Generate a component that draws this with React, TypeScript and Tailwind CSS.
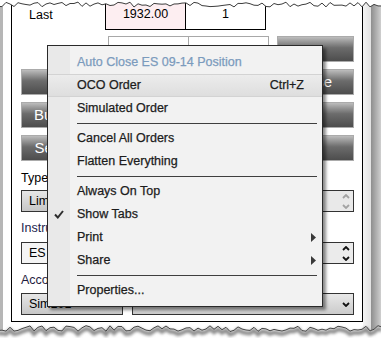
import React from 'react';

type Item =
  | { sep: true }
  | { sep?: false; label: string; disabled?: boolean; hover?: boolean; shortcut?: string; check?: boolean; sub?: boolean };

const menu: Item[] = [
  { label: 'Auto Close ES 09-14 Position', disabled: true },
  { label: 'OCO Order', shortcut: 'Ctrl+Z', hover: true },
  { label: 'Simulated Order' },
  { sep: true },
  { label: 'Cancel All Orders' },
  { label: 'Flatten Everything' },
  { sep: true },
  { label: 'Always On Top' },
  { label: 'Show Tabs', check: true },
  { label: 'Print', sub: true },
  { label: 'Share', sub: true },
  { sep: true },
  { label: 'Properties...' },
];

function jag(y0: number, amp: number, seed: number) {
  let s = seed;
  const pts: string[] = [];
  for (let x = -2; x <= 384; x += 4) {
    s = (s * 9301 + 49297) % 233280;
    const r = s / 233280;
    pts.push(`${x},${(y0 + (r - 0.5) * amp).toFixed(1)}`);
  }
  return pts;
}

function Caret({ down, color }: { down?: boolean; color: string }) {
  return (
    <svg width="8" height="5" viewBox="0 0 8 5">
      <path d={down ? 'M1,1 L4,4 L7,1' : 'M1,4 L4,1 L7,4'} fill="none" stroke={color} strokeWidth="1.8" />
    </svg>
  );
}

function Btn({ label, className = '' }: { label?: string; className?: string }) {
  return (
    <div className={`h-[26px] flex items-center justify-center border border-[#ababab] bg-gradient-to-b from-[#bdbdbd] via-[#6c6c6c] via-45% to-[#4d4d4d] text-white text-[15px] whitespace-nowrap overflow-hidden ${className}`}>
      {label}
    </div>
  );
}

export default function App() {
  const top = jag(4.5, 5, 17);
  const bot = jag(328.5, 6, 91);

  return (
    <div className="relative w-[381px] h-[340px] bg-white overflow-hidden font-['Liberation_Sans',Arial,sans-serif] text-black">
      <div className="flex h-[330px]">
        <div className="w-[3px] bg-[#b6b6b6]" />
        <div className="w-[8px]" />
        <div className="w-[352px] flex flex-col">
          {/* window body */}
          <div className="h-[322px] border-x border-b border-black pl-[9px] pr-[8px] flex flex-col">
            {/* Last row */}
            <div className="flex h-[30px] text-[12.5px]">
              <div className="w-[84px] pl-[8px] flex items-center">Last</div>
              <div className="w-[81px] bg-[#fdeef1] border-x border-b border-black flex items-center justify-center">1932.00</div>
              <div className="w-[80px] border-r border-b border-black flex items-center justify-center">1</div>
            </div>

            <div className="flex mt-[6px] gap-[8px]">
              <div className="w-[84px]" />
              <div className="flex">
                <div className="w-[81px] h-[26px] border border-[#a8a8a8]" />
                <div className="w-[80px] h-[26px] border border-l-0 border-[#a8a8a8]" />
              </div>
              <Btn className="w-[82px] ml-auto" />
            </div>

            <div className="flex flex-col gap-[7px] mt-[7px]">
              <div className="flex gap-[9px]">
                <Btn className="w-[102px]" />
                <Btn className="flex-1" />
                <Btn className="w-[82px]" label="Close" />
              </div>
              <div className="flex gap-[9px]">
                <Btn className="w-[102px]" label="Buy Market" />
                <Btn className="flex-1" />
                <Btn className="w-[82px]" />
              </div>
              <div className="flex gap-[9px]">
                <Btn className="w-[102px]" label="Sell Market" />
                <Btn className="flex-1" />
                <Btn className="w-[82px]" />
              </div>
            </div>

            <div className="mt-[9px] h-[16px] text-[12.5px] leading-[16px]">Type</div>
            <div className="flex gap-[9px] mt-[4px] text-[12.5px]">
              <div className="w-[102px] h-[22px] border border-[#333] bg-gradient-to-b from-[#e6e6e6] to-[#c7c7c7] pl-[7px] flex items-center">Limit</div>
              <div className="flex-1 h-[22px] border border-[#333] bg-[#e9e9e9] flex flex-col items-end justify-center gap-[5px] pr-[3px]">
                <Caret color="#a3a3a3" />
                <Caret down color="#a3a3a3" />
              </div>
            </div>

            <div className="mt-[8px] h-[16px] text-[12.5px] leading-[16px] text-[#221d4d]">Instrument</div>
            <div className="flex gap-[9px] mt-[6px] text-[12.5px]">
              <div className="w-[102px] h-[22px] border border-[#333] bg-[#f4f4f4] pl-[7px] flex items-center">ES 09-14</div>
              <div className="flex-1 h-[22px] border border-[#333] bg-[#ebebeb] flex flex-col items-end justify-center gap-[5px] pr-[3px]">
                <Caret color="#111" />
                <Caret down color="#111" />
              </div>
            </div>

            <div className="mt-[8px] h-[16px] text-[12.5px] leading-[16px] text-[#1f1d40]">Account</div>
            <div className="flex gap-[9px] mt-[5px] text-[12.5px]">
              <div className="w-[102px] h-[22px] border border-[#333] bg-gradient-to-b from-[#e6e6e6] to-[#c7c7c7] pl-[7px] flex items-center">Sim101</div>
              <div className="flex-1 h-[22px] border border-[#333] bg-gradient-to-b from-[#e8e8e8] to-[#cbcbcb] flex items-center justify-end pr-[3px]">
                <Caret down color="#111" />
              </div>
            </div>
          </div>
        </div>
        <div className="w-[8px] bg-gradient-to-r from-[#f4f4f4] to-[#e2e2e2]" />
        <div className="w-[10px] bg-gradient-to-r from-[#8e8e8e] to-[#cfcfcf]" />
      </div>

      {/* torn edges */}
      <svg className="absolute inset-0 pointer-events-none" width="381" height="340" viewBox="0 0 381 340">
        <defs>
          <filter id="blur" x="-5%" y="-50%" width="110%" height="200%">
            <feGaussianBlur stdDeviation="1.6" />
          </filter>
        </defs>
        <path d={`M-2,-2 L${top.join(' L')} L384,-2 Z`} fill="#fff" />
        <polyline points={top.join(' ')} fill="none" stroke="#3c3c3c" strokeWidth="1" />
        <path d={`M-2,342 L${bot.join(' L')} L384,342 Z`} fill="#fff" />
        <polyline points={bot.join(' ')} transform="translate(0,3)" fill="none" stroke="#8a8a8a" strokeWidth="4" filter="url(#blur)" />
        <polyline points={bot.join(' ')} fill="none" stroke="#444" strokeWidth="1" />
      </svg>

      {/* context menu */}
      <div className="absolute left-[47px] top-[45px] w-[276px] border border-[#2a2a2a] shadow-[3px_3px_3px_rgba(0,0,0,0.45)] bg-[linear-gradient(to_right,#e9e9e9_22px,#f2f2f2_22px)] pt-[5px] pb-[4px] text-[12.5px] [-webkit-text-stroke:0.25px_currentColor]">
        {menu.map((it, i) =>
          it.sep ? (
            <div key={i} className="h-[7px] flex items-center pl-[29px] pr-[5px]">
              <div className="h-px w-full bg-[#3f3f3f]" />
            </div>
          ) : (
            <div
              key={i}
              className={`h-[23px] flex items-center ${it.hover ? 'bg-gradient-to-b from-[#ececec] to-[#dedede] border-y border-[#d3d3d3]' : ''}`}
            >
              <div className="w-[22px] flex items-center justify-center">
                {it.check && (
                  <svg width="10" height="9" viewBox="0 0 10 9">
                    <path d="M1,4.5 L3.8,7.5 L9,1" fill="none" stroke="#2e2e2e" strokeWidth="2" />
                  </svg>
                )}
              </div>
              <div className={`pl-[7px] whitespace-nowrap ${it.disabled ? 'text-[#7b9bbd]' : 'text-[#1c1c1c]'}`}>{it.label}</div>
              {it.shortcut && <div className="ml-auto pr-[18px] text-[#1c1c1c]">{it.shortcut}</div>}
              {it.sub && (
                <div className="ml-auto pr-[6px] flex items-center">
                  <svg width="5" height="9" viewBox="0 0 5 9">
                    <path d="M0,0 L5,4.5 L0,9 Z" fill="#3a3a3a" />
                  </svg>
                </div>
              )}
            </div>
          )
        )}
      </div>
    </div>
  );
}
